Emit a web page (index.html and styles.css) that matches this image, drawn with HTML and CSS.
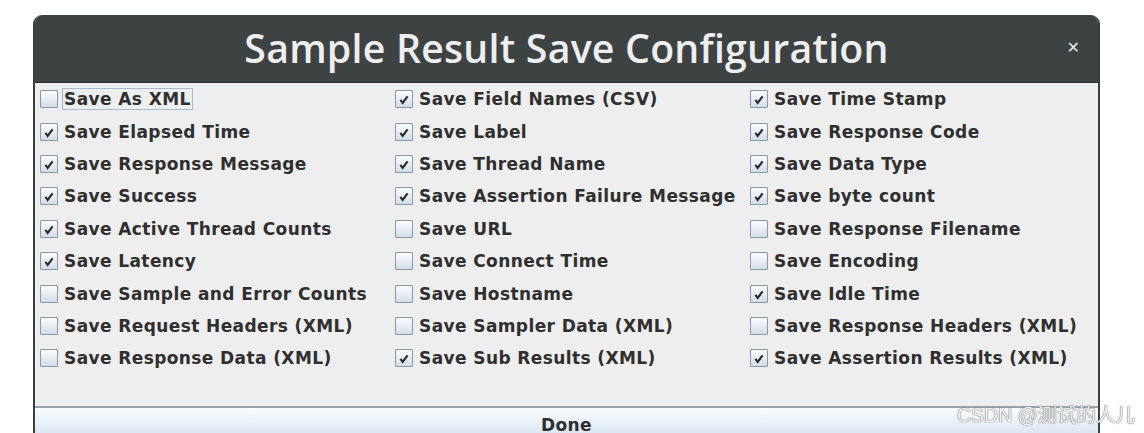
FILE: index.html
```html
<!DOCTYPE html>
<html>
<head>
<meta charset="utf-8">
<link rel="stylesheet" href="styles.css">
</head>
<body>
<div class="window">
  <div class="titlebar">
    <div class="title">Sample Result Save Configuration</div>
    <div class="close">&#x2715;</div>
  </div>
  <div class="content">
    <div class="grid">
      <div class="item"><span class="cb"></span><span class="lbl focus">Save As XML</span></div>
      <div class="item"><span class="cb on"><svg viewBox="0 0 18 18"><path d="M5 10 L7.5 13.5 L13 6"/></svg></span><span class="lbl">Save Field Names (CSV)</span></div>
      <div class="item"><span class="cb on"><svg viewBox="0 0 18 18"><path d="M5 10 L7.5 13.5 L13 6"/></svg></span><span class="lbl">Save Time Stamp</span></div>

      <div class="item"><span class="cb on"><svg viewBox="0 0 18 18"><path d="M5 10 L7.5 13.5 L13 6"/></svg></span><span class="lbl">Save Elapsed Time</span></div>
      <div class="item"><span class="cb on"><svg viewBox="0 0 18 18"><path d="M5 10 L7.5 13.5 L13 6"/></svg></span><span class="lbl">Save Label</span></div>
      <div class="item"><span class="cb on"><svg viewBox="0 0 18 18"><path d="M5 10 L7.5 13.5 L13 6"/></svg></span><span class="lbl">Save Response Code</span></div>

      <div class="item"><span class="cb on"><svg viewBox="0 0 18 18"><path d="M5 10 L7.5 13.5 L13 6"/></svg></span><span class="lbl">Save Response Message</span></div>
      <div class="item"><span class="cb on"><svg viewBox="0 0 18 18"><path d="M5 10 L7.5 13.5 L13 6"/></svg></span><span class="lbl">Save Thread Name</span></div>
      <div class="item"><span class="cb on"><svg viewBox="0 0 18 18"><path d="M5 10 L7.5 13.5 L13 6"/></svg></span><span class="lbl">Save Data Type</span></div>

      <div class="item"><span class="cb on"><svg viewBox="0 0 18 18"><path d="M5 10 L7.5 13.5 L13 6"/></svg></span><span class="lbl">Save Success</span></div>
      <div class="item"><span class="cb on"><svg viewBox="0 0 18 18"><path d="M5 10 L7.5 13.5 L13 6"/></svg></span><span class="lbl">Save Assertion Failure Message</span></div>
      <div class="item"><span class="cb on"><svg viewBox="0 0 18 18"><path d="M5 10 L7.5 13.5 L13 6"/></svg></span><span class="lbl">Save byte count</span></div>

      <div class="item"><span class="cb on"><svg viewBox="0 0 18 18"><path d="M5 10 L7.5 13.5 L13 6"/></svg></span><span class="lbl">Save Active Thread Counts</span></div>
      <div class="item"><span class="cb"></span><span class="lbl">Save URL</span></div>
      <div class="item"><span class="cb"></span><span class="lbl">Save Response Filename</span></div>

      <div class="item"><span class="cb on"><svg viewBox="0 0 18 18"><path d="M5 10 L7.5 13.5 L13 6"/></svg></span><span class="lbl">Save Latency</span></div>
      <div class="item"><span class="cb"></span><span class="lbl">Save Connect Time</span></div>
      <div class="item"><span class="cb"></span><span class="lbl">Save Encoding</span></div>

      <div class="item"><span class="cb"></span><span class="lbl">Save Sample and Error Counts</span></div>
      <div class="item"><span class="cb"></span><span class="lbl">Save Hostname</span></div>
      <div class="item"><span class="cb on"><svg viewBox="0 0 18 18"><path d="M5 10 L7.5 13.5 L13 6"/></svg></span><span class="lbl">Save Idle Time</span></div>

      <div class="item"><span class="cb"></span><span class="lbl">Save Request Headers (XML)</span></div>
      <div class="item"><span class="cb"></span><span class="lbl">Save Sampler Data (XML)</span></div>
      <div class="item"><span class="cb"></span><span class="lbl">Save Response Headers (XML)</span></div>

      <div class="item"><span class="cb"></span><span class="lbl">Save Response Data (XML)</span></div>
      <div class="item"><span class="cb on"><svg viewBox="0 0 18 18"><path d="M5 10 L7.5 13.5 L13 6"/></svg></span><span class="lbl">Save Sub Results (XML)</span></div>
      <div class="item"><span class="cb on"><svg viewBox="0 0 18 18"><path d="M5 10 L7.5 13.5 L13 6"/></svg></span><span class="lbl">Save Assertion Results (XML)</span></div>
    </div>
    <div class="done">Done</div>
  </div>
</div>
<div class="watermark">CSDN @测试的人儿</div>
</body>
</html>
```

FILE: styles.css
```css
html, body {
  margin: 0;
  padding: 0;
  background: #ffffff;
  overflow: hidden;
}
body {
  width: 1144px;
  height: 433px;
  position: relative;
}
.window {
  margin: 15px 0 0 33px;
  width: 1067px;
  height: 430px;
  border-left: 2px solid #3b3f40;
  border-right: 2px solid #3b3f40;
  box-sizing: border-box;
  border-radius: 9px 9px 0 0;
  overflow: hidden;
  background: #eeeeee;
}
.titlebar {
  height: 67px;
  background: #3d4243;
  border-bottom: 1px solid #2a2d2e;
  display: flex;
  align-items: center;
  justify-content: center;
  position: relative;
}
.title {
  font-family: "Open Sans", sans-serif;
  font-size: 39.3px;
  font-weight: 600;
  color: #eeeeee;
  letter-spacing: 0.2px;
  margin-top: -2px;
}
.close {
  position: absolute;
  right: 18px;
  top: 23px;
  color: #e8e8e8;
  font-family: "DejaVu Sans", sans-serif;
  font-weight: bold;
  font-size: 16px;
}
.content {
  display: flex;
  flex-direction: column;
}
.grid {
  display: grid;
  grid-template-columns: 355px 355px 1fr;
  grid-auto-rows: 32.4px;
  padding-left: 5px;
}
.item {
  display: flex;
  align-items: center;
  gap: 4px;
}
.cb {
  width: 16px;
  height: 16px;
  border: 1px solid #8b97a3;
  border-radius: 1px;
  background: linear-gradient(#fbfcfd, #d3dde8);
  display: flex;
  flex: none;
}
.cb svg {
  width: 16px;
  height: 16px;
}
.cb svg path {
  fill: none;
  stroke: #2a2a2a;
  stroke-width: 2.4;
}
.lbl {
  font-family: "DejaVu Sans", sans-serif;
  font-weight: bold;
  font-size: 17px;
  color: #2f2f2f;
  letter-spacing: 0.4px;
  padding: 0 1px;
  border: 1px solid transparent;
}
.lbl.focus {
  border-color: #a9bacb;
}
.done {
  margin-top: 31px;
  height: 34px;
  border-top: 2px solid #9aa3ac;
  background: linear-gradient(#fbfcfe, #d3e1ef);
  font-family: "DejaVu Sans", sans-serif;
  font-weight: bold;
  font-size: 17px;
  color: #2f2f2f;
  letter-spacing: 0.4px;
  display: flex;
  justify-content: center;
  padding-top: 7px;
  box-sizing: border-box;
}
.watermark {
  position: absolute;
  left: 957px;
  top: 399px;
  font-family: "Liberation Sans", "Noto Sans CJK SC", sans-serif;
  font-size: 19.5px;
  color: #f6f6f6;
  text-shadow: 0 0 1px #666, 0 0 1px #666;
}
```
